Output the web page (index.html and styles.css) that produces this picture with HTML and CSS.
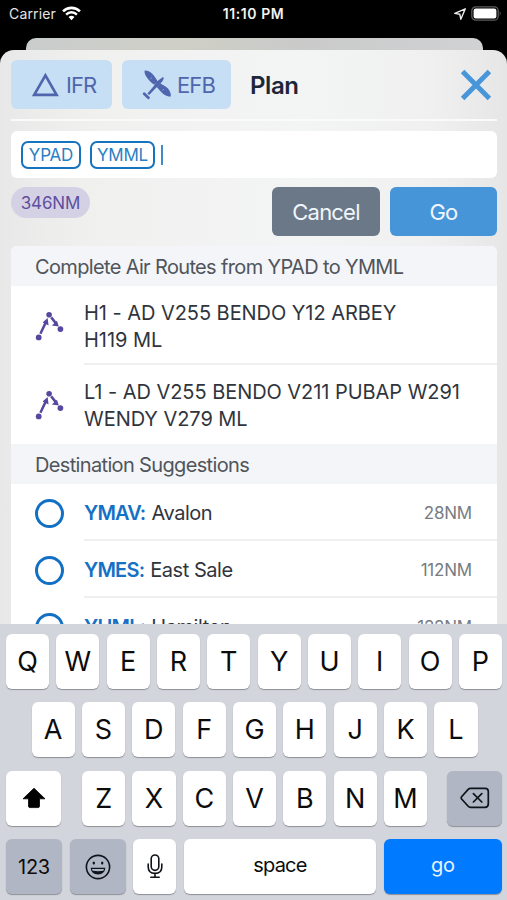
FILE: index.html
```html
<!DOCTYPE html>
<html lang="en">
    <head>
        <meta charset="utf-8">
        <meta name="viewport" content="width=device-width, initial-scale=1">
        <title>Plan</title>
        <link rel="stylesheet" href="styles.css">
    </head>
    <body>
        <div class="phone">
            <div class="status">
                <div class="carrier">
                    <span>Carrier</span>
                    <svg width="19" height="15" viewBox="0 0 18 14">
                        <path d="M1 5 A11.4 11.4 0 0 1 17 5" fill="none" stroke="#fff" stroke-width="2.5"/>
                        <path d="M3.9 8 A7.2 7.2 0 0 1 14.1 8" fill="none" stroke="#fff" stroke-width="2.3"/>
                        <path d="M6.2 10.4 A4.2 4.2 0 0 1 11.8 10.4 L9 13.3 Z" fill="#fff"/>
                    </svg>
                </div>
                <div class="time">11:10 PM</div>
                <div class="indicators">
                    <svg width="12" height="12" viewBox="0 0 12 12">
                        <path d="M11.3 .8 L.8 5.4 L5.8 6.2 L6.8 11.2 Z" fill="none" stroke="#eee" stroke-width="1.4" stroke-linejoin="round"/>
                    </svg>
                    <svg width="31" height="15" viewBox="0 0 31 15">
                        <rect x=".8" y=".8" width="26.4" height="13.4" rx="4" fill="none" stroke="#5c5c5c" stroke-width="1.3"/>
                        <rect x="2.6" y="2.6" width="22.8" height="9.8" rx="2.2" fill="#fff"/>
                        <path d="M28.7 5 Q30.6 7.5 28.7 10 Z" fill="#5c5c5c"/>
                    </svg>
                </div>
            </div>

            <div class="backsheet"></div>

            <div class="sheet">
                <div class="header">
                    <button class="mode ifr">
                        <svg width="28" height="25" viewBox="0 0 28 25">
                            <path d="M14.4 3.4 L25.6 22.9 H3.2 Z" fill="none" stroke="#4f66ae" stroke-width="2.7"/>
                        </svg>
                        <span>IFR</span>
                    </button>
                    <button class="mode efb">
                        <svg width="30" height="30" viewBox="0 0 30 30">
                            <g fill="#4f66ae">
                                <path d="M2.7 .4 C5 .2 8 1.4 10 3.6 C12 5.6 13.4 7.8 15.6 11.2 L12.2 14.8 C9 12.4 6 9.6 4.4 6.8 C3 4.6 2.2 2.4 2.7 .4 Z"/>
                                <path d="M18.4 13.6 C21.4 15.2 24.4 16.6 26.2 18.8 C28.2 21.2 29.2 24.4 28.8 26.6 C26 26.6 22.8 25.4 20.4 23.2 C18.4 21.4 16.6 19.4 14.8 17 Z"/>
                                <path d="M20.2 7.4 Q21.8 6.8 21.8 8.6 L20.6 11 L17.4 15 L13.4 18.4 L7.2 25 L5.4 23.4 L11.4 16.4 L14.6 11.8 Z"/>
                            </g>
                            <path d="M2.2 23.8 L6.4 27.8" stroke="#4f66ae" stroke-width="2.8" stroke-linecap="round"/>
                            <path d="M8.4 8.8 L9.8 7.6 M20.4 20.4 L21.8 19.2" stroke="#8fa8d6" stroke-width="1"/>
                        </svg>
                        <span>EFB</span>
                    </button>
                    <h1>Plan</h1>
                    <svg class="close" width="32" height="32" viewBox="0 0 32 32">
                        <path d="M2.6 2.6 L29.4 29.4 M29.4 2.6 L2.6 29.4" stroke="#4896da" stroke-width="5"/>
                    </svg>
                </div>

                <div class="search">
                    <span class="tag tag-from">YPAD</span>
                    <span class="tag tag-to">YMML</span>
                    <span class="caret"></span>
                </div>

                <div class="actions">
                    <span class="distance">346NM</span>
                    <button class="btn cancel">Cancel</button>
                    <button class="btn go">Go</button>
                </div>

                <div class="list">
                    <h2>Complete Air Routes from YPAD to YMML</h2>
                    <div class="row route">
                        <svg width="30" height="30" viewBox="0 0 30 30">
                            <g fill="#57489f">
                                <circle cx="3.7" cy="26.4" r="2.9"/>
                                <circle cx="14.1" cy="3.8" r="2.8"/>
                                <circle cx="25.4" cy="18.1" r="2.9"/>
                                <path d="M12.6 7 L13.6 14.4 L7.6 11.6 Z"/>
                                <path d="M23.8 15.6 L16.8 14.4 L22 9.8 Z"/>
                            </g>
                            <path d="M5.4 22.8 L10.8 11.4 M16.2 6.4 L21 12.4" stroke="#57489f" stroke-width="2.5"/>
                        </svg>
                        <p>H1 - AD V255 BENDO Y12 ARBEY<br>H119 ML</p>
                    </div>
                    <div class="row route last">
                        <svg width="30" height="30" viewBox="0 0 30 30">
                            <g fill="#57489f">
                                <circle cx="3.7" cy="26.4" r="2.9"/>
                                <circle cx="14.1" cy="3.8" r="2.8"/>
                                <circle cx="25.4" cy="18.1" r="2.9"/>
                                <path d="M12.6 7 L13.6 14.4 L7.6 11.6 Z"/>
                                <path d="M23.8 15.6 L16.8 14.4 L22 9.8 Z"/>
                            </g>
                            <path d="M5.4 22.8 L10.8 11.4 M16.2 6.4 L21 12.4" stroke="#57489f" stroke-width="2.5"/>
                        </svg>
                        <p>L1 - AD V255 BENDO V211 PUBAP W291<br>WENDY V279 ML</p>
                    </div>
                    <h2>Destination Suggestions</h2>
                    <div class="row dest">
                        <span class="radio"></span>
                        <div class="place"><b>YMAV:</b> Avalon <span class="nm">28NM</span></div>
                    </div>
                    <div class="row dest">
                        <span class="radio"></span>
                        <div class="place"><b>YMES:</b> East Sale <span class="nm">112NM</span></div>
                    </div>
                    <div class="row dest">
                        <span class="radio"></span>
                        <div class="place"><b>YHML:</b> Hamilton <span class="nm">122NM</span></div>
                    </div>
                </div>
            </div>

            <div class="keyboard">
                <div class="keys">
                    <span class="key">Q</span><span class="key">W</span><span class="key">E</span><span class="key">R</span><span class="key">T</span><span class="key">Y</span><span class="key">U</span><span class="key">I</span><span class="key">O</span><span class="key">P</span>
                </div>
                <div class="keys middle">
                    <span class="key">A</span><span class="key">S</span><span class="key">D</span><span class="key">F</span><span class="key">G</span><span class="key">H</span><span class="key">J</span><span class="key">K</span><span class="key">L</span>
                </div>
                <div class="keys">
                    <span class="key shift">
                        <svg width="24" height="22" viewBox="0 0 24 22">
                            <path d="M12 1.2 L23 11.8 H17.5 V19 Q17.5 20.6 16 20.6 H8 Q6.5 20.6 6.5 19 V11.8 H1 Z" fill="#000" stroke="#000" stroke-width=".8" stroke-linejoin="round"/>
                        </svg>
                    </span>
                    <span class="key">Z</span><span class="key">X</span><span class="key">C</span><span class="key">V</span><span class="key">B</span><span class="key">N</span><span class="key">M</span>
                    <span class="key back grey">
                        <svg width="30" height="22" viewBox="0 0 30 22">
                            <path d="M10.6 1.3 H25 Q28.3 1.3 28.3 4.6 V17 Q28.3 20.3 25 20.3 H10.6 Q9.2 20.3 8.2 19.2 L1.6 12 Q.8 10.8 1.6 9.7 L8.2 2.4 Q9.2 1.3 10.6 1.3 Z M13.4 6.6 L21.8 15 M21.8 6.6 L13.4 15" fill="none" stroke="#10131a" stroke-width="1.7" stroke-linecap="round"/>
                        </svg>
                    </span>
                </div>
                <div class="keys">
                    <span class="key num grey">123</span>
                    <span class="key emoji grey">
                        <svg width="26" height="26" viewBox="0 0 26 26">
                            <circle cx="13" cy="13" r="11.6" fill="none" stroke="#10131a" stroke-width="1.6"/>
                            <ellipse cx="8.8" cy="9" rx="1.2" ry="1.6" fill="#10131a"/>
                            <ellipse cx="17.2" cy="9" rx="1.2" ry="1.6" fill="#10131a"/>
                            <path d="M5.6 13.8 H20.4 Q19.6 20.4 13 20.4 Q6.4 20.4 5.6 13.8 Z" fill="#10131a"/>
                            <path d="M7 14.9 H19 L18.4 16.7 Q13 17.6 7.6 16.7 Z" fill="#b0b6c3"/>
                        </svg>
                    </span>
                    <span class="key mic">
                        <svg width="16" height="25" viewBox="0 0 16 25">
                            <rect x="4.2" y="1" width="7.6" height="15.4" rx="3.8" fill="none" stroke="#10131a" stroke-width="1.6"/>
                            <path d="M1.2 10 V13 Q1.2 19.4 8 19.4 Q14.8 19.4 14.8 13 V10 M8 19.4 V23 M3.8 23.2 H12.2" fill="none" stroke="#10131a" stroke-width="1.6" stroke-linecap="round"/>
                        </svg>
                    </span>
                    <span class="key space">space</span>
                    <span class="key enter">go</span>
                </div>
            </div>
        </div>
    </body>
</html>
```
FILE: styles.css
```css
*{
    margin: 0;
    padding: 0;
    box-sizing: border-box;
}
body{
    background: #000;
    font-family: Inter, "Liberation Sans", sans-serif;
}
button{
    border: none;
    font-family: inherit;
}
svg{
    display: block;
    flex: none;
}

.phone{
    width: 507px;
    height: 900px;
    overflow: hidden;
    display: flex;
    flex-direction: column;
    background: #000;
}

/* status bar */
.status{
    height: 38px;
    flex: none;
    display: grid;
    grid-template-columns: 1fr auto 1fr;
    padding: 0 5px 11px 9px;
    align-items: center;
    color: #e4e4e4;
    font-size: 14px;
}
.carrier{
    display: flex;
    align-items: center;
    gap: 6px;
    letter-spacing: .15px;
}
.time{
    margin-right: 4px;
    color: #f2f2f2;
    font-weight: 600;
    letter-spacing: .6px;
}
.indicators{
    display: flex;
    justify-content: flex-end;
    align-items: center;
    gap: 5px;
}

/* sheets */
.backsheet{
    height: 12px;
    flex: none;
    margin: 0 24px 0 26px;
    border-radius: 10px 10px 0 0;
    background: linear-gradient(90deg, #c9cdcd, #cfcfc6 35%, #cacaca 60%, #d0d2d3);
}
.sheet{
    height: 574px;
    flex: none;
    overflow: hidden;
    padding: 10px 10px 0 11px;
    border-radius: 14px 14px 0 0;
    background: linear-gradient(90deg, #e8e8e8, #f0f1ef 18%, #f3f4f4 60%, #f0f0f0 85%, #e6e6e6);
}

.header{
    height: 61px;
    display: flex;
    align-items: center;
    padding-bottom: 10px;
    border-bottom: 2px solid #fafafa;
    margin-bottom: 10px;
}
.mode{
    height: 49px;
    border-radius: 6px;
    background: #c7dff4;
    color: #4f66ae;
    display: flex;
    align-items: center;
    font-size: 22px;
    letter-spacing: -.9px;
}
.ifr{
    width: 101px;
    padding-left: 20px;
    gap: 7px;
}
.efb{
    width: 109px;
    margin-left: 10px;
    padding-left: 20px;
    gap: 5px;
}
h1{
    margin-left: 19px;
    padding-top: 1px;
    font-size: 24px;
    font-weight: 600;
    letter-spacing: -.4px;
    color: #1d2638;
}
.close{
    margin-left: auto;
    margin-right: 5px;
}

.search{
    height: 47px;
    border-radius: 6px;
    background: #fff;
    display: flex;
    align-items: center;
    padding-left: 10px;
}
.tag{
    height: 28px;
    border: 2px solid #1673be;
    border-radius: 7px;
    color: #2b7fc3;
    font-size: 17px;
    line-height: 24px;
    letter-spacing: -.2px;
    text-align: center;
}
.tag-from{
    width: 60px;
}
.tag-to{
    width: 65px;
    margin-left: 9px;
}
.caret{
    width: 2px;
    height: 20px;
    margin-left: 6px;
    background: #4488c8;
}

.actions{
    display: flex;
    align-items: flex-start;
    margin-top: 9px;
}
.distance{
    width: 79px;
    height: 31px;
    border-radius: 16px;
    background: #d5d1e5;
    color: #5d4f9d;
    font-size: 17px;
    line-height: 32px;
    letter-spacing: -.15px;
    text-align: center;
    margin-right: auto;
}
.btn{
    height: 49px;
    padding-top: 1px;
    border-radius: 6px;
    font-size: 22px;
    letter-spacing: -.8px;
    color: #f0f6fc;
}
.cancel{
    width: 108px;
    background: #6b7887;
}
.go{
    width: 107px;
    margin-left: 10px;
    background: #4795d9;
}

/* results */
.list{
    margin-top: 10px;
    border-radius: 6px;
    overflow: hidden;
    background: #fff;
}
h2{
    height: 40px;
    padding-left: 24px;
    background: #f3f5f8;
    color: #50545b;
    font-size: 20px;
    font-weight: 400;
    line-height: 42px;
    letter-spacing: -.65px;
    white-space: nowrap;
}
.row{
    display: flex;
    align-items: center;
    padding-left: 24px;
    color: #30353d;
    font-size: 20px;
    line-height: 27px;
    white-space: nowrap;
}
.route{
    height: 79px;
    letter-spacing: -.05px;
}
.route p{
    flex: 1;
    height: 79px;
    margin-left: 19px;
    padding-top: 14px;
    border-bottom: 2px solid #eeeff0;
}
.last p{
    border-bottom: none;
}
.dest{
    height: 57px;
}
.radio{
    width: 29px;
    height: 29px;
    margin-top: 1px;
    border: 3.5px solid #1270c4;
    border-radius: 50%;
}
.place{
    flex: 1;
    display: flex;
    align-items: center;
    height: 100%;
    margin-left: 20px;
    padding: 4px 25px 0 0;
    border-bottom: 2px solid #eeeff0;
    letter-spacing: -.45px;
}
.place b{
    color: #1471c5;
    font-weight: 600;
    letter-spacing: -.8px;
    margin-right: 6px;
}
.nm{
    margin-left: auto;
    color: #777c82;
    font-size: 17px;
    letter-spacing: -.2px;
}

/* keyboard */
.keyboard{
    flex: 1;
    padding: 9.5px 5px 0 6px;
    background: #d3d5dc;
    display: flex;
    flex-direction: column;
    gap: 13.5px;
}
.keys{
    display: flex;
    gap: 7.2px;
}
.middle{
    padding: 0 24.5px 0 25.5px;
}
.key{
    flex: 1;
    height: 55px;
    border-radius: 6px;
    background: #fff;
    box-shadow: 0 1px 1px #8d9097;
    display: flex;
    align-items: center;
    justify-content: center;
    font-size: 27px;
    color: #0c0c0c;
}
.grey{
    background: #b0b6c3;
}
.shift{
    flex: none;
    width: 55px;
    margin-right: 14px;
}
.back{
    flex: none;
    width: 55px;
    margin-left: 13px;
}
.num{
    flex: none;
    width: 56px;
    font-size: 20px;
    letter-spacing: -.3px;
}
.emoji{
    flex: none;
    width: 56px;
    margin-left: 1px;
}
.mic{
    flex: none;
    width: 43px;
}
.space{
    padding-bottom: 3px;
    font-size: 20px;
    letter-spacing: -.8px;
}
.enter{
    flex: none;
    width: 118.5px;
    padding-bottom: 3px;
    background: #007aff;
    color: #e8f3ff;
    font-size: 20px;
    letter-spacing: -.5px;
}
```
